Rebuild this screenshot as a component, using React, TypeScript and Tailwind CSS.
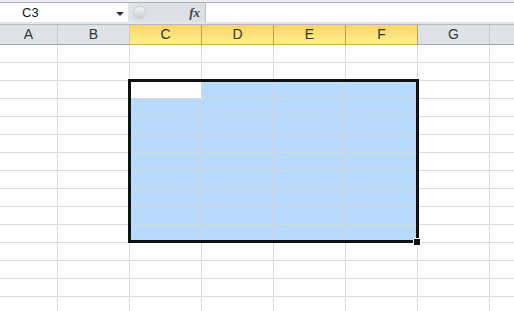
import React from "react";

const cols = [
  { name: "A", w: 58 },
  { name: "B", w: 72 },
  { name: "C", w: 72 },
  { name: "D", w: 72 },
  { name: "E", w: 72 },
  { name: "F", w: 72 },
  { name: "G", w: 72 },
  { name: "", w: 72 },
];

const selCols = ["C", "D", "E", "F"];
const rows = Array.from({ length: 15 }, (_, i) => i + 1);

const HeaderCell = ({ name, w }: { name: string; w: number }) => {
  const sel = selCols.includes(name);
  return (
    <div
      style={{ width: w }}
      className={
        sel
          ? "flex h-full shrink-0 items-center justify-center border-r border-b border-r-[#c29a45] border-b-[#e0a83a] bg-gradient-to-b from-[#fcd467] to-[#fff08f] text-[14px] text-[#333]"
          : "flex h-full shrink-0 items-center justify-center border-r border-b border-r-[#c6cace] border-b-[#9ca3ab] bg-[#dfe3e8] text-[14px] text-[#333]"
      }
    >
      {name}
    </div>
  );
};

export default function App() {
  return (
    <div className="relative h-[311px] w-[514px] overflow-hidden bg-white font-['Liberation_Sans',sans-serif]">
      {/* Formula bar */}
      <div className="flex h-[25px] flex-col bg-[#e3e6ea]">
        <div className="h-[3px] border-b border-[#aab1b9] bg-[#eef0f3]" />
        <div className="flex h-[19px] items-stretch">
          <div className="relative flex w-[128px] shrink-0 items-center bg-white pl-[22px] text-[13px] text-[#111]">
            C3
            <div className="absolute top-[9px] left-[116px] h-0 w-0 border-x-[4px] border-t-[4px] border-x-transparent border-t-[#333]" />
          </div>
          <div className="ml-[2px] flex w-[76px] shrink-0 items-center justify-between rounded-l-[10px] border-r border-[#b9bfc6] bg-[#dde1e6] pr-[5px] pl-[4px]">
            <div className="h-[11px] w-[11px] rounded-full bg-gradient-to-b from-[#f4f5f7] to-[#c7ccd2] shadow-[0_0_0_1px_#c9ced4]" />
            <span className="font-['Liberation_Serif',serif] text-[13px] font-bold text-[#444] italic">fx</span>
          </div>
          <div className="flex-1 bg-white" />
        </div>
        <div className="h-[3px] border-b border-[#b3b9c0]" />
      </div>

      {/* Column headers */}
      <div className="flex h-[20px]">
        {cols.map((c, i) => (
          <HeaderCell key={i} name={c.name} w={c.w} />
        ))}
      </div>

      {/* Grid */}
      <div className="flex flex-col">
        {rows.map((r) => (
          <div key={r} className="flex h-[18px]">
            {cols.map((c, i) => {
              const inSel = r >= 3 && r <= 11 && selCols.includes(c.name);
              const active = r === 3 && c.name === "C";
              return (
                <div
                  key={i}
                  style={{ width: c.w }}
                  className={
                    inSel && !active
                      ? "h-full shrink-0 border-r border-b border-[#d6d9dc] bg-[#b7dafd]"
                      : "h-full shrink-0 border-r border-b border-[#d9d9d9] bg-white"
                  }
                />
              );
            })}
          </div>
        ))}
      </div>

      {/* Selection outline */}
      <div className="absolute top-[79px] left-[128px] h-[164px] w-[291px] border-[3px] border-[#111]" />
      {/* Fill handle */}
      <div className="absolute top-[239px] left-[414px] h-[6px] w-[6px] bg-[#111] shadow-[0_0_0_1px_#fff]" />
    </div>
  );
}
